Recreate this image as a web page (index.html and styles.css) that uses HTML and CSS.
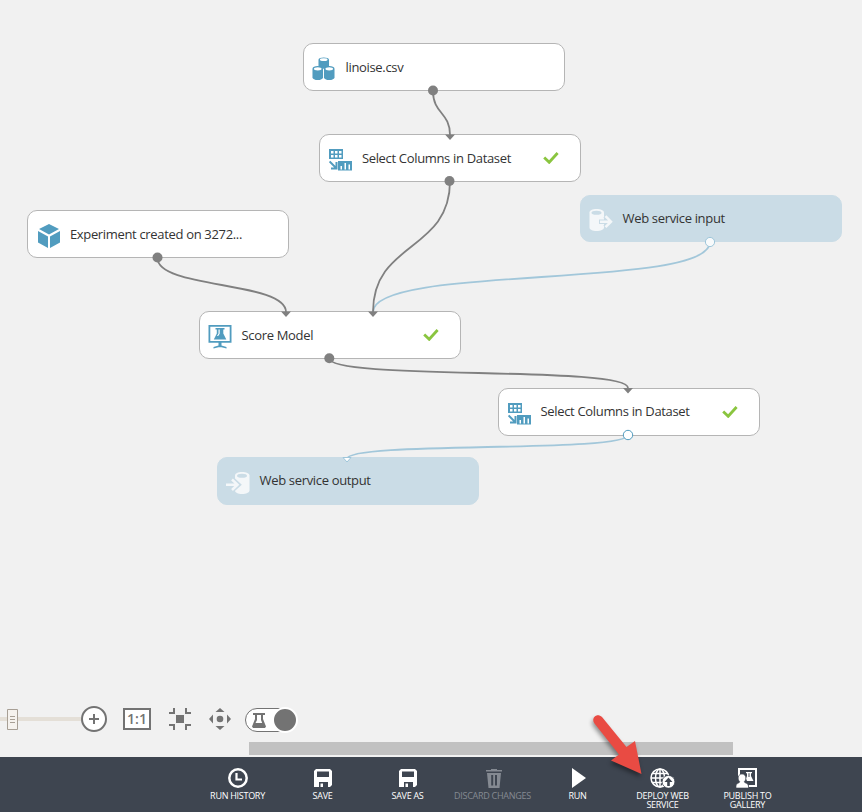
FILE: index.html
```html
<!DOCTYPE html>
<html lang="en">
<head>
<meta charset="utf-8">
<title>Experiment canvas</title>
<link rel="stylesheet" href="styles.css">
</head>
<body>
<svg class="defs" aria-hidden="true">
  <symbol id="cyl" viewBox="0 0 12 16" preserveAspectRatio="none">
    <path fill="#519cbf" d="M.5 3.500C.5 1.500 3 .5 6 .5s5.500 1 5.500 3v9c0 2-2.500 3-5.500 3s-5.500-1-5.500-3z"/>
    <ellipse cx="6" cy="3.500" rx="4" ry="1.700" fill="#fff"/>
  </symbol>
  <symbol id="columns" viewBox="0 0 23 22">
    <path fill="#519cbf" d="M0 0h14v10H0z"/>
    <path fill="#fff" d="M2 2h2.500v2.500H2zM6 2h2.500v2.500H6zM10 2h2.500v2.500H10zM2 6h2.500v2.500H2zM6 6h2.500v2.500H6zM10 6h2.500v2.500H10z"/>
    <path fill="none" stroke="#519cbf" stroke-width="2" d="M.6 12.500l6 6M7.500 13v6.500H2"/>
    <path fill="#519cbf" d="M9 12h14v9.500H9z"/>
    <path fill="#fff" d="M11.500 17H13v3.500h-1.500zM15.500 14H17v6.500h-1.500zM19.500 15.500H21v5h-1.500z"/>
  </symbol>
  <symbol id="cube" viewBox="0 0 22 24">
    <path fill="#519cbf" d="M11 0l10 5-10 5.500L1 5zM0 7l10 5.500V24L0 18.500zM22 7l-10 5.500V24l10-5.500z"/>
  </symbol>
  <symbol id="model" viewBox="0 0 23 24">
    <path fill="#fff" stroke="#519cbf" stroke-width="1.800" d="M.9.900h21.200v16H.9z"/>
    <path fill="#519cbf" d="M7 3h9v1.500h-1.200v4l3 6H5.300l3-6v-4H7zM10 17h3v3.500l5 1.500v1.500l-5-1.300h-3l-5 1.300V22l5-1.500z"/>
    <path fill="#fff" d="M10 4.500h1.200v4.300L9.700 11H8.500L10 8.500z"/>
  </symbol>
  <symbol id="check" viewBox="0 0 16 12">
    <path fill="none" stroke="#8ac53f" stroke-width="2.800" d="M1.200 5.500l5 4.800L14.600 1"/>
  </symbol>
  <symbol id="ws-in" viewBox="0 0 24 23">
    <path fill="#f4f7f9" d="M.5 4C.5 1.800 3.500.500 7.500.500S15 1.800 15 4v15c0 2-3.500 3.500-7.500 3.500S.5 21 .5 19z"/>
    <ellipse cx="7.500" cy="4.300" rx="5" ry="2" fill="#cadce6"/>
    <path fill="none" stroke="#cadce6" stroke-width="4.500" d="M10 13.200h11M16 7.700l5.500 5.500-5.500 5.500"/>
    <path fill="none" stroke="#f4f7f9" stroke-width="2.500" d="M11 13.200h11M16.500 7.700l5.500 5.500-5.500 5.500"/>
  </symbol>
  <symbol id="ws-out" viewBox="0 0 24 23">
    <path fill="#f4f7f9" d="M9 4C9 1.800 12 .5 16 .5S23.500 1.800 23.500 4v15c0 2-3.500 3.500-7.500 3.500S9 21 9 19z"/>
    <ellipse cx="16" cy="4.300" rx="5" ry="2" fill="#cadce6"/>
    <path fill="none" stroke="#cadce6" stroke-width="4.500" d="M6.500 7.700l6 5.500-6 5.500"/>
    <path fill="none" stroke="#f4f7f9" stroke-width="2.500" d="M0 13.200h11M6 8l5.500 5.200L6 18.500"/>
  </symbol>
  <symbol id="disk" viewBox="0 0 18 18">
    <path fill="#fff" fill-rule="evenodd" d="M2 0h14l2 2v14l-2 2h-2v-5H5v5H0V2zM3 2.500V8h12V2.500z"/>
    <path fill="#fff" d="M6.500 14.500H9V18H6.500z"/>
  </symbol>
</svg>

<main class="canvas">
  <div class="node n-data"><svg class="icon" viewBox="0 0 24 24"><use href="#cyl" x="6" y="0" width="11.500" height="12"/><use href="#cyl" x="0" y="8.500" width="11.500" height="15"/><use href="#cyl" x="11.500" y="8.500" width="11.500" height="15"/></svg><span class="label">linoise.csv</span></div>
  <div class="node n-select1"><svg class="icon columns"><use href="#columns"/></svg><span class="label">Select Columns in Dataset</span><svg class="check"><use href="#check"/></svg></div>
  <div class="node n-experiment"><svg class="icon cube"><use href="#cube"/></svg><span class="label">Experiment created on 3272...</span></div>
  <div class="node service n-input"><svg class="icon"><use href="#ws-in"/></svg><span class="label">Web service input</span></div>
  <div class="node n-score"><svg class="icon model"><use href="#model"/></svg><span class="label">Score Model</span><svg class="check"><use href="#check"/></svg></div>
  <div class="node n-select2"><svg class="icon columns"><use href="#columns"/></svg><span class="label">Select Columns in Dataset</span><svg class="check"><use href="#check"/></svg></div>
  <div class="node service n-output"><svg class="icon"><use href="#ws-out"/></svg><span class="label">Web service output</span></div>

  <svg class="wires" viewBox="0 0 862 742">
    <g class="wire light">
      <path d="M710 242C710 290 373 264 373 312"/>
      <path d="M628 435C628 453 347 441 347 459"/>
    </g>
    <g class="wire">
      <path d="M433 91C433 114 450 112 450 135"/>
      <path d="M450 181C450 252 373 241 373 312"/>
      <path d="M157.500 258C157.500 289 286 281 286 312"/>
      <path d="M329 358C329 381 628 365 628 388"/>
    </g>
    <g fill="#808080">
      <circle cx="433" cy="90.500" r="5"/><circle cx="449.500" cy="181" r="5"/>
      <circle cx="157.500" cy="257.500" r="5"/><circle cx="329.300" cy="358.300" r="5"/>
      <path d="M445 134.500h10l-5 5.500zM281 311.500h10l-5 5.500zM368 311.500h10l-5 5.500zM623 388h10l-5 5.500z"/>
    </g>
    <circle cx="710" cy="242" r="4.600" fill="#f8fafb" stroke="#9ec6da"/>
    <circle cx="628" cy="435" r="4.700" fill="#fff" stroke="#519cbf"/>
    <path d="M343 457.500h8l-4 4.500z" fill="#fff" stroke="#9ec6da"/>
  </svg>

  <div class="controls">
    <div class="slider"><svg width="11" height="21" viewBox="0 0 11 21"><path fill="#f5f2ee" stroke="#a79f95" d="M.5.5h10v20H.5z"/><path stroke="#a79f95" d="M3 7.500h5M3 10.500h5M3 13.500h5"/></svg></div>
    <svg class="plus" width="26" height="26" viewBox="0 0 26 26"><circle cx="13" cy="13" r="12" fill="#fff" stroke="#737373" stroke-width="2"/><path stroke="#737373" stroke-width="2" d="M8 13h10M13 8v10"/></svg>
    <div class="ratio">1:1</div>
    <svg class="fit" width="22" height="22" viewBox="0 0 22 22"><path fill="#737373" d="M7 7h8v8H7z"/><path fill="none" stroke="#737373" stroke-width="2" d="M0 5h5V0M17 0v5h5M0 17h5v5M22 17h-5v5"/></svg>
    <svg class="pan" width="22" height="22" viewBox="0 0 22 22"><circle cx="11" cy="11" r="3.300" fill="#737373"/><path fill="#737373" d="M11 0l4.500 4h-9zM11 22l4.500-4h-9zM0 11l4-4.500v9zM22 11l-4-4.500v9z"/></svg>
    <div class="toggle"><svg width="14" height="15" viewBox="0 0 14 15"><path fill="#737373" fill-rule="evenodd" d="M1 0h12v2h-2v4l3 7.500-1 1.500H1l-1-1.500L3 6V2H1zM5 2v5L3.500 10h6.700L9 7V2z"/></svg><span class="knob"></span></div>
  </div>
</main>

<div class="scrollbar"><div class="thumb"></div></div>

<footer class="bar">
  <div class="action"><svg width="20" height="20" viewBox="0 0 20 20"><circle cx="10" cy="10" r="8.700" fill="none" stroke="#fff" stroke-width="2.500"/><path fill="none" stroke="#fff" stroke-width="2.200" d="M8.500 5v6.500H14"/></svg><span>RUN HISTORY</span></div>
  <div class="action"><svg width="18" height="20" viewBox="0 -1 18 20"><use href="#disk" width="18" height="18"/></svg><span>SAVE</span></div>
  <div class="action"><svg width="18" height="20" viewBox="0 -1 18 20"><use href="#disk" width="18" height="18"/></svg><span>SAVE AS</span></div>
  <div class="action off"><svg class="trash" width="16" height="20" viewBox="0 0 16 20"><path fill="#858a92" fill-rule="evenodd" d="M5 1h6v1h5v1.500H0V2h5zM1 5h14l-1.500 15h-11zM5.200 7v10.500h2V7zM9 7v10.500h2V7z"/></svg><span>DISCARD CHANGES</span></div>
  <div class="action"><svg class="play" width="14" height="20" viewBox="0 0 14 20"><path fill="#fff" d="M0 0l14 10L0 20z"/></svg><span>RUN</span></div>
  <div class="action"><svg width="25" height="20" viewBox="0 0 25 20"><g fill="none" stroke="#fff" stroke-width="1.500"><circle cx="10" cy="10" r="9"/><ellipse cx="10" cy="10" rx="4.500" ry="9"/><path d="M10 1v18M1 10h18M2.500 5.500h15M2.500 14.500h15"/></g><circle cx="18.500" cy="13.800" r="6.400" fill="#fff" stroke="#3e4550" stroke-width=".8"/><path fill="#3e4550" d="M18.500 9.500l4 4.500h-2.700v4h-2.600v-4h-2.700z"/></svg><span>DEPLOY WEB SERVICE</span></div>
  <div class="action"><svg class="publish" width="21" height="20" viewBox="0 0 21 20"><path fill="none" stroke="#fff" stroke-width="2" d="M3 8V1h17v17h-7"/><path fill="#fff" d="M10 4h6v1.200h-1V8l2.500 5h-6.500L10 10.500l1-2.500V5.200h-1z"/><path stroke="#3e4550" d="M13 5.200V9"/><path fill="#fff" stroke="#3e4550" stroke-width=".6" d="M6 6c2.500 0 3.800 1.700 3.800 4 0 1.800-.8 3-1.600 3.800 0 1.200 4.300 1.500 4.300 4.200v2H0v-2c0-2.700 3.800-3 3.800-4.200C3 13 2.200 11.800 2.200 10c0-2.300 1.300-4 3.800-4z"/></svg><span>PUBLISH TO GALLERY</span></div>
</footer>

<svg class="pointer" width="60" height="75" viewBox="0 0 60 75"><path fill="#e94b43" d="M11.500 16.500C7.500 11 14 5 19 10L43.500 40 52 34l6.500 33L28 53.500l8-6z"/></svg>
</body>
</html>
```
FILE: styles.css
```css
* { box-sizing: border-box; }
body {
  margin: 0;
  width: 862px;
  height: 812px;
  overflow: hidden;
  position: relative;
  display: flex;
  flex-direction: column;
  background: #f1f1f1;
  font-family: "Open Sans", "Noto Sans", sans-serif;
}
svg { display: block; flex: none; }
.defs { position: absolute; width: 0; height: 0; }
.canvas {
  position: relative;
  height: 742px;
  display: flex;
  flex-direction: column;
  justify-content: flex-end;
}
.node {
  position: absolute;
  width: 262px;
  height: 48px;
  display: flex;
  align-items: center;
  padding: 3px 21px 0 8px;
  background: #fff;
  border: 1px solid #b5b5b5;
  border-radius: 10px;
}
.service { background: #cadce6; border-color: #cadce6; }
.n-data { left: 303px; top: 43px; }
.n-select1 { left: 319.400px; top: 134px; }
.n-experiment { left: 27.400px; top: 210.400px; }
.n-input { left: 580px; top: 195px; height: 47px; }
.n-score { left: 199px; top: 311px; }
.n-select2 { left: 498px; top: 388px; }
.n-output { left: 217px; top: 457px; }
.icon { width: 24px; height: 24px; margin-right: 9.500px; }
.icon.columns { width: 23px; height: 22px; margin: 1px 9.500px 0 1px; }
.icon.cube { width: 22px; margin: 0 9.500px 0 2px; }
.icon.model { margin-top: 1px; }
.label {
  font-size: 13px;
  line-height: 18px;
  letter-spacing: -.33px;
  margin-top: -4px;
  white-space: nowrap;
  color: #333;
}
.n-select2 .label, .n-output .label { margin-top: -6px; }
.check { width: 16px; height: 12px; margin: -3px 0 0 auto; }
.wires { position: absolute; inset: 0; width: 862px; height: 742px; }
.wire { fill: none; stroke: #808080; stroke-width: 1.8; }
.wire.light { stroke: #a2c7da; }
.controls {
  display: flex;
  align-items: center;
  height: 26px;
  margin-bottom: 10px;
}
.slider {
  width: 81px;
  height: 21px;
  padding-left: 7px;
  background: linear-gradient(#e4dfd7, #e4dfd7) 0 8px / 81px 4px no-repeat;
}
.ratio {
  width: 28px;
  height: 22px;
  margin-left: 16px;
  border: 2px solid #737373;
  background: #fff;
  color: #737373;
  font-size: 14px;
  font-weight: 600;
  line-height: 18px;
  text-align: center;
}
.fit, .pan { margin-left: 18px; }
.toggle {
  display: flex;
  align-items: center;
  justify-content: space-between;
  width: 52px;
  height: 24px;
  margin: 2px 0 0 14px;
  padding-left: 6px;
  background: #fff;
  border: 1px solid #737373;
  border-radius: 12px;
}
.knob {
  width: 26px;
  height: 26px;
  flex: none;
  margin-right: -2px;
  background: #737373;
  border: 2px solid #fff;
  border-radius: 50%;
}
.scrollbar { height: 15px; padding-left: 249px; background: #f1f1f1; }
.thumb { width: 484px; height: 13px; background: #c1c1c1; }
.bar {
  height: 55px;
  display: flex;
  padding: 11px 0 0 195px;
  background: #3e4550;
}
.action {
  width: 85px;
  display: flex;
  flex-direction: column;
  align-items: center;
  color: #fff;
  font-size: 9px;
  font-weight: 500;
  line-height: 9px;
  letter-spacing: -.28px;
  text-align: center;
}
.action span { margin-top: 3px; max-width: 84px; padding: 0 8px; }
.action.off { color: #858a92; }
.action.off span { padding: 0; white-space: nowrap; }
.play { margin-left: 2px; }
.trash { margin-left: 2px; }
.publish { margin-right: 2px; }
.pointer {
  position: absolute;
  left: 583px;
  top: 707px;
  overflow: visible;
  filter: drop-shadow(-1px 3px 2px rgba(0, 0, 0, .4));
}
```
